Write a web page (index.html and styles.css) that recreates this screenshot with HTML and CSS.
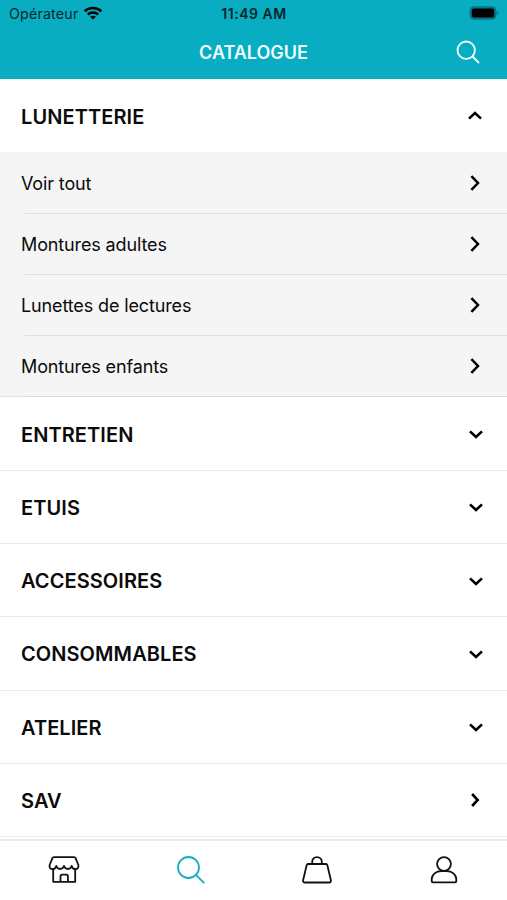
FILE: index.html
```html
<!DOCTYPE html>
<html lang="fr">
<head>
<meta charset="utf-8">
<title>Catalogue</title>
<link rel="stylesheet" href="styles.css">
</head>
<body>
<svg width="0" height="0" class="defs">
  <symbol id="down" viewBox="0 0 14 14"><path d="M1 4.400 7 10l6-5.600"/></symbol>
  <symbol id="up" viewBox="0 0 14 14"><path d="M1 9.600 7 4l6 5.600"/></symbol>
  <symbol id="right" viewBox="0 0 14 14"><path d="M4.100 1 9.700 7l-5.600 6"/></symbol>
  <symbol id="go" viewBox="0 0 14 16"><path d="M3.400 1.100 10 8l-6.600 6.900"/></symbol>
</svg>
<div class="app">
  <header class="header">
    <div class="status">
      <div class="carrier"><span class="operator">Opérateur</span>
        <svg class="wifi" width="20" height="14" viewBox="0 0 20 14"><path d="M1.600 5.300c4.800-4.400 12-4.400 16.800 0M4.800 8.500c3-2.700 7.400-2.700 10.400 0"/><path class="dot" d="M10 13.600 7.100 10.800c1.600-1.500 4.200-1.500 5.800 0z"/></svg>
      </div>
      <time class="time">11:49 AM</time>
      <svg class="battery" width="31" height="14" viewBox="0 0 31 14"><rect class="shell" x="1" y=".8" width="26" height="12.400" rx="3.800"/><rect x="2.800" y="2.600" width="22.400" height="8.800" rx="2"/><path class="tip" d="M28.200 4.800v4.400c2-.8 2-3.600 0-4.400z"/></svg>
    </div>
    <div class="titlebar">
      <h1 class="title">CATALOGUE</h1>
      <svg class="search" width="24" height="24" viewBox="0 0 24 24"><circle cx="10.200" cy="10.200" r="8.700"/><path d="m16.500 16.500 6 6"/></svg>
    </div>
  </header>
  <main class="catalogue">
    <div class="category open"><span>LUNETTERIE</span><svg class="chevron"><use href="#up"/></svg></div>
    <ul class="sublist">
      <li class="subitem"><span>Voir tout</span><svg class="go"><use href="#go"/></svg></li>
      <li class="subitem"><span>Montures adultes</span><svg class="go"><use href="#go"/></svg></li>
      <li class="subitem"><span>Lunettes de lectures</span><svg class="go"><use href="#go"/></svg></li>
      <li class="subitem"><span>Montures enfants</span><svg class="go"><use href="#go"/></svg></li>
    </ul>
    <div class="category"><span>ENTRETIEN</span><svg class="chevron"><use href="#down"/></svg></div>
    <div class="category"><span>ETUIS</span><svg class="chevron"><use href="#down"/></svg></div>
    <div class="category"><span>ACCESSOIRES</span><svg class="chevron"><use href="#down"/></svg></div>
    <div class="category"><span>CONSOMMABLES</span><svg class="chevron"><use href="#down"/></svg></div>
    <div class="category"><span>ATELIER</span><svg class="chevron"><use href="#down"/></svg></div>
    <div class="category"><span>SAV</span><svg class="chevron side"><use href="#right"/></svg></div>
  </main>
  <nav class="tabs">
    <a class="tab store"><svg width="32" height="28" viewBox="0 0 32 28"><path d="M6 1.200h20c.8 0 1.300.4 1.600 1l2.800 6.800c.4 2.500-.8 4.200-2.800 4.200-2 0-3.400-1.400-3.900-3.300-.5 2-1.800 3.100-3.800 3.100s-3.400-1.100-3.900-3.100c-.5 2-1.900 3.100-3.900 3.100s-3.300-1.100-3.800-3.100c-.5 1.900-1.900 3.300-3.900 3.300S1.200 11.500 1.600 9l2.800-6.800c.3-.6.8-1 1.600-1z"/><path d="M5.200 13.200v12.600h22V13.200M12.500 25.800v-5.600c0-1 .6-1.600 1.600-1.600h4.200c1 0 1.600.6 1.600 1.600v5.600"/></svg></a>
    <a class="tab active"><svg width="28" height="28" viewBox="0 0 28 28"><circle cx="11.500" cy="11.500" r="10.500"/><path d="m19.200 19.200 7.500 7.500"/></svg></a>
    <a class="tab"><svg width="30" height="28" viewBox="0 0 30 28"><path d="M6 8h18c.7 0 1.100.3 1.300 1l3.600 15.200c.3 1.300-.5 2.300-1.800 2.300H2.900c-1.300 0-2.100-1-1.800-2.300L4.700 9c.2-.7.6-1 1.300-1zM10.200 8V5.800c0-2.800 2-4.700 4.800-4.700s4.800 1.900 4.800 4.700V8"/></svg></a>
    <a class="tab"><svg width="28" height="28" viewBox="0 0 28 28"><circle cx="14" cy="8" r="6.900"/><path d="M11.500 15h5c5.500 0 9.800 3.500 9.800 8.300v1.500c0 1-.6 1.600-1.600 1.600H3.300c-1 0-1.600-.6-1.600-1.600v-1.500c0-4.800 4.300-8.300 9.800-8.300z"/></svg></a>
  </nav>
</div>
</body>
</html>
```

FILE: styles.css
```css
* { box-sizing: border-box; }
body { margin: 0; background: #fff; color: #0b0b0b; font-family: Inter, "Liberation Sans", sans-serif; }
.defs { display: none; }
svg { display: block; flex: none; fill: none; stroke: currentColor; stroke-linecap: round; stroke-linejoin: round; }
.app { width: 507px; height: 900px; display: flex; flex-direction: column; overflow: hidden; }
.header { height: 79.3px; flex: none; background: #09adc1; }
.status { height: 27px; display: grid; grid-template-columns: 1fr auto 1fr; align-items: center; padding: 0 7px 0 9px; color: #06262b; }
.carrier { display: flex; align-items: center; gap: 6px; font-size: 14.2px; }
.operator { letter-spacing: .2px; }
.wifi { color: #000; stroke-width: 2.6; stroke-linecap: butt; margin-top: -2px; margin-left: -1px; }
.wifi .dot { fill: #000; stroke: none; }
.time { font-size: 14px; font-weight: 600; letter-spacing: .55px; margin-right: 1px; }
.battery { justify-self: end; stroke: none; fill: #000; margin-top: -1px; }
.battery .shell { fill: #087683; stroke: #087683; }
.battery .tip { fill: #087683; }
.titlebar { height: 50px; display: grid; grid-template-columns: 1fr auto 1fr; align-items: center; padding: 0 27px; color: #effcfd; }
.title { grid-column: 2; margin: 0; font-size: 18px; font-weight: 600; }
.search { justify-self: end; stroke-width: 1.8; }
.catalogue { flex: none; height: 759.7px; }
.category { height: 73.3px; display: flex; align-items: center; justify-content: space-between; padding: 2px 24px 0 21px; border-bottom: 1px solid #ebebeb; font-size: 20px; font-weight: 600; letter-spacing: .08px; }
.category.open { height: 72.7px; padding-right: 25.5px; border: 0; }
.chevron { width: 14px; height: 14px; color: #000; stroke-width: 2.6; stroke-linecap: butt; stroke-linejoin: miter; margin-top: -1px; }
.open .chevron { margin-top: -2px; }
.chevron.side { margin-top: -3px; margin-right: 1px; }
.sublist { list-style: none; margin: 0; padding: 0 0 0 25px; background: #f5f5f5; height: 245.4px; border-bottom: 1px solid #e4e4e4; }
.subitem { height: 61.1px; border-bottom: 1px solid #e0e0e0; display: flex; align-items: center; justify-content: space-between; padding: 1px 24px 0 0; font-size: 18px; letter-spacing: -.13px; }
.subitem:first-child { height: 61.7px; padding-top: 2px; }
.subitem:last-child { border-color: #dadada; }
.subitem span { margin-left: -4px; }
.go { width: 14px; height: 16px; color: #000; stroke-width: 2.5; stroke-linecap: butt; stroke-linejoin: miter; margin-right: 1px; }
.tabs { flex: 1; border-top: 2px solid #ececec; display: grid; grid-template-columns: repeat(4, 1fr); padding-top: 15px; }
.tab { display: flex; justify-content: center; align-items: flex-start; color: #111; }
.tab svg { stroke-width: 1.8; }
.tab.store { padding-left: 2px; }
.tab.active { color: #16adc0; padding-left: 1px; }
```
